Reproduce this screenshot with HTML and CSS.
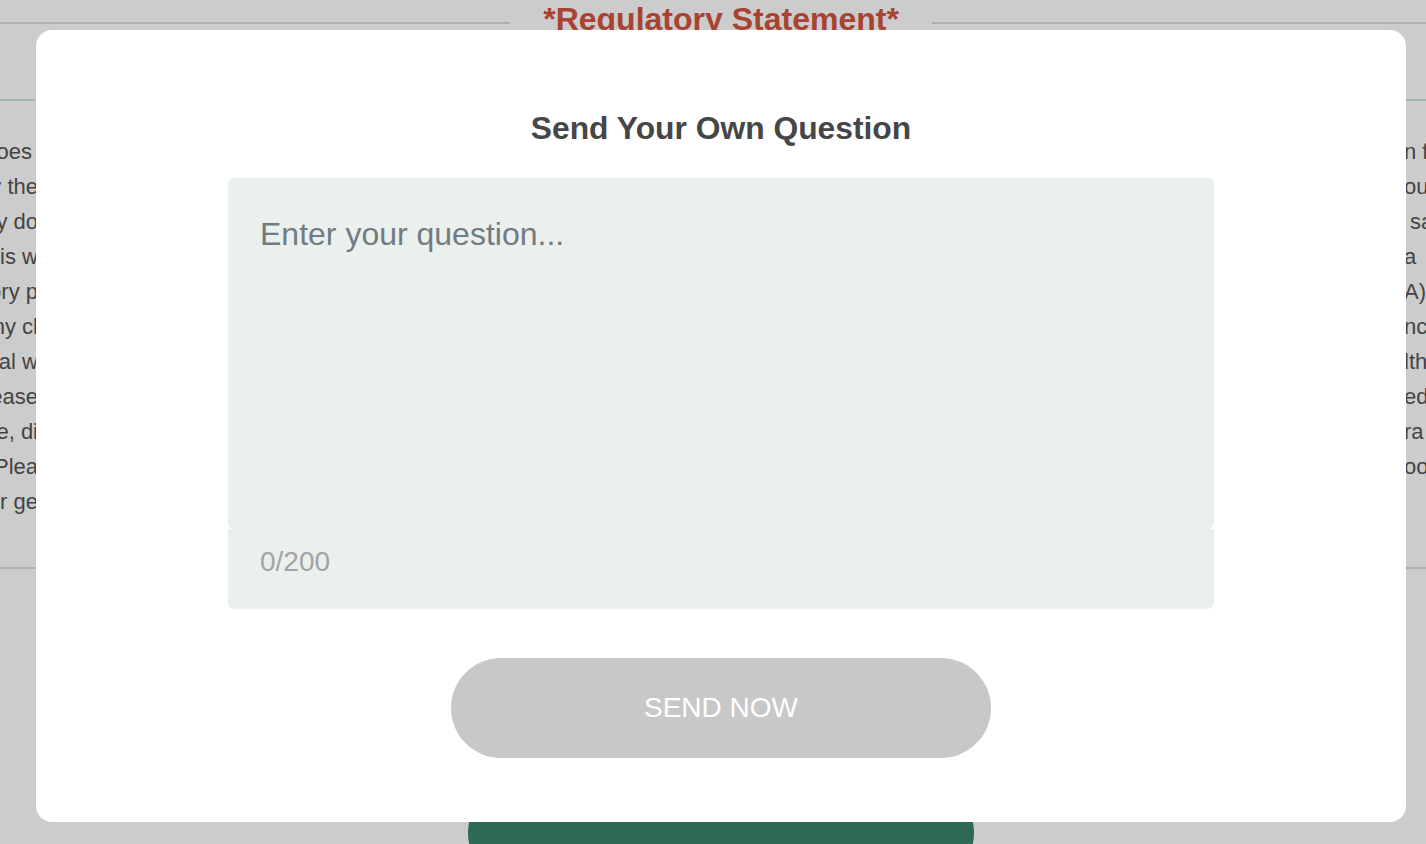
FILE: index.html
```html
<!DOCTYPE html>
<html lang="en">
<head>
<meta charset="UTF-8" />
<meta name="viewport" content="width=device-width, initial-scale=1" />
<title>Send Your Own Question</title>
<link rel="stylesheet" href="styles.css">
</head>
<body>

<div class="page">
  <div class="reg-head">
    <span class="rule"></span>
    <h2>*Regulatory Statement*</h2>
    <span class="rule"></span>
  </div>
  <div class="divider"></div>

  <div class="statement">
    <div class="ln"><span class="ln-a">This section describes what the product does&nbsp;</span><span class="ln-b">n for</span></div>
    <div class="ln"><span class="ln-a">and how it may be used by the</span><span class="ln-b">our</span></div>
    <div class="ln"><span class="ln-a">answers are not written by do</span><span class="ln-b">&nbsp;sa</span></div>
    <div class="ln"><span class="ln-a">the information is w</span><span class="ln-b">a</span></div>
    <div class="ln"><span class="ln-a">under the regulatory p</span><span class="ln-b">A)</span></div>
    <div class="ln"><span class="ln-a">it does not make any cl</span><span class="ln-b">nc</span></div>
    <div class="ln"><span class="ln-a">replace professional medical w</span><span class="ln-b">lth</span></div>
    <div class="ln"><span class="ln-a">treat any disease</span><span class="ln-b">ed</span></div>
    <div class="ln"><span class="ln-a">prevent, cure, di</span><span class="ln-b">ra</span></div>
    <div class="ln"><span class="ln-a">condition. Plea</span><span class="ln-b">ool</span></div>
    <div class="ln"><span class="ln-a">for ge</span><span class="ln-b"></span></div>
  </div>

  <div class="divider lower"></div>
  <div class="cta"></div>
</div>

<div class="overlay">
  <div class="modal">
    <h3>Send Your Own Question</h3>
    <div class="field">
      <textarea placeholder="Enter your question..." maxlength="200"></textarea>
      <div class="counter">0/200</div>
    </div>
    <button class="send" disabled>SEND NOW</button>
  </div>
</div>

</body>
</html>
```

FILE: styles.css
```css
/* Basic reset */
* {
  box-sizing: border-box;
  font-family: 'Liberation Sans', Arial, sans-serif;
}
body {
  margin: 0;
  background: #fff;
  overflow: hidden;
}

/* page behind the dialog */
.page {
  width: 1442px;
}
.reg-head {
  display: flex;
  align-items: flex-start;
  gap: 33px;
  padding-top: 1px;
}
.reg-head .rule {
  flex: 1;
  height: 2px;
  margin-top: 21px;
  background: #dadada;
}
.reg-head h2 {
  margin: 0;
  font-size: 32px;
  line-height: 37px;
  font-weight: 700;
  color: #d2543f;
}
.divider {
  height: 2px;
  margin-top: 61px;
  background: #d2e2db;
}
.divider.lower {
  margin-top: 48px;
}
.statement {
  margin-top: 33px;
  font-size: 22px;
  line-height: 35px;
  color: #555;
}
.ln {
  display: flex;
  white-space: nowrap;
}
.ln-a {
  flex: none;
  width: 38px;
  display: flex;
  justify-content: flex-end;
}
.ln-b {
  flex: none;
  width: 38px;
  margin-left: auto;
}
.cta {
  width: 506px;
  height: 100px;
  margin: 214px auto 0;
  border-radius: 50px;
  background: #3a846a;
}

/* dialog */
.overlay {
  position: fixed;
  inset: 0;
  display: flex;
  padding: 30px 20px 22px 36px;
  background: rgba(0, 0, 0, 0.2);
}
.modal {
  flex: 1;
  display: flex;
  flex-direction: column;
  align-items: center;
  padding-top: 80px;
  background: #fff;
  border-radius: 16px;
}
.modal h3 {
  margin: 0 0 31px;
  font-size: 31.8px;
  font-weight: 700;
  color: #464646;
}
.field {
  width: 986px;
  display: flex;
  flex-direction: column;
}
.field textarea {
  height: 351px;
  padding: 31px 32px;
  border: none;
  border-radius: 6px;
  outline: none;
  resize: none;
  background: #eaf0ee;
  font-size: 32px;
  line-height: 1.6;
  color: #333;
}
.field textarea::placeholder {
  color: #747b80;
}
.counter {
  height: 80px;
  padding: 17px 32px 0;
  border-radius: 0 0 6px 6px;
  background: #eaf0ee;
  font-size: 28px;
  line-height: 32px;
  color: #a3a3a3;
}
.send {
  width: 540px;
  height: 100px;
  margin-top: 49px;
  border: none;
  border-radius: 50px;
  background: #c8c8c8;
  color: #fff;
  font-size: 28px;
  font-weight: 400;
}
```
